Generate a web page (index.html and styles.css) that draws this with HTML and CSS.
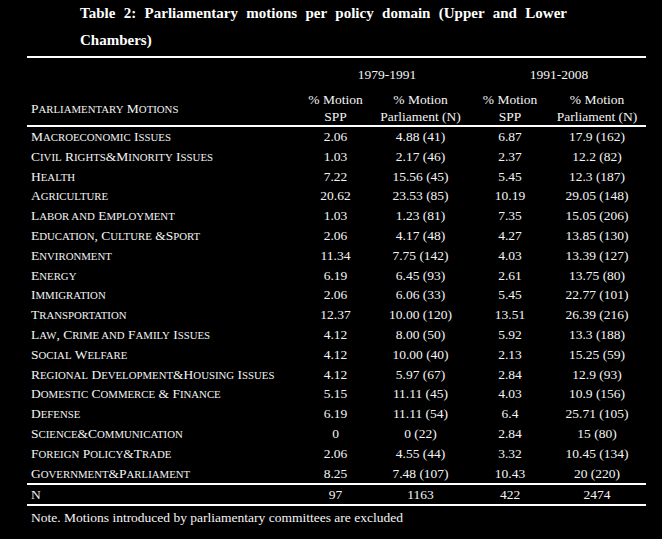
FILE: index.html
```html
<!DOCTYPE html>
<html lang="en">
<head>
<meta charset="utf-8">
<title>Table 2: Parliamentary motions per policy domain</title>
<link rel="stylesheet" href="styles.css">
</head>
<body>
<div class="page">
  <h1 class="title">Table 2: Parliamentary motions per policy domain (Upper and Lower Chambers)</h1>
  <table class="data">
    <colgroup>
      <col class="c-label">
      <col class="c-1">
      <col class="c-2">
      <col class="c-3">
      <col class="c-4">
    </colgroup>
    <thead>
      <tr class="period-row">
        <th class="label"></th>
        <th colspan="2">1979-1991</th>
        <th colspan="2">1991-2008</th>
      </tr>
      <tr class="sub-row">
        <th class="label">P<span class="sm">arliamentary</span> M<span class="sm">otions</span></th>
        <th>% Motion<br>SPP</th>
        <th>% Motion<br>Parliament (N)</th>
        <th>% Motion<br>SPP</th>
        <th>% Motion<br>Parliament (N)</th>
      </tr>
    </thead>
    <tbody class="body">
      <tr><td class="label">M<span class="sm">acroeconomic</span> I<span class="sm">ssues</span></td><td>2.06</td><td>4.88 (41)</td><td>6.87</td><td>17.9 (162)</td></tr>
      <tr><td class="label">C<span class="sm">ivil</span> R<span class="sm">ights</span>&amp;M<span class="sm">inority</span> I<span class="sm">ssues</span></td><td>1.03</td><td>2.17 (46)</td><td>2.37</td><td>12.2 (82)</td></tr>
      <tr><td class="label">H<span class="sm">ealth</span></td><td>7.22</td><td>15.56 (45)</td><td>5.45</td><td>12.3 (187)</td></tr>
      <tr><td class="label">A<span class="sm">griculture</span></td><td>20.62</td><td>23.53 (85)</td><td>10.19</td><td>29.05 (148)</td></tr>
      <tr><td class="label">L<span class="sm">abor and</span> E<span class="sm">mployment</span></td><td>1.03</td><td>1.23 (81)</td><td>7.35</td><td>15.05 (206)</td></tr>
      <tr><td class="label">E<span class="sm">ducation</span>, C<span class="sm">ulture</span> &amp;S<span class="sm">port</span></td><td>2.06</td><td>4.17 (48)</td><td>4.27</td><td>13.85 (130)</td></tr>
      <tr><td class="label">E<span class="sm">nvironment</span></td><td>11.34</td><td>7.75 (142)</td><td>4.03</td><td>13.39 (127)</td></tr>
      <tr><td class="label">E<span class="sm">nergy</span></td><td>6.19</td><td>6.45 (93)</td><td>2.61</td><td>13.75 (80)</td></tr>
      <tr><td class="label">I<span class="sm">mmigration</span></td><td>2.06</td><td>6.06 (33)</td><td>5.45</td><td>22.77 (101)</td></tr>
      <tr><td class="label">T<span class="sm">ransportation</span></td><td>12.37</td><td>10.00 (120)</td><td>13.51</td><td>26.39 (216)</td></tr>
      <tr><td class="label">L<span class="sm">aw</span>, C<span class="sm">rime and</span> F<span class="sm">amily</span> I<span class="sm">ssues</span></td><td>4.12</td><td>8.00 (50)</td><td>5.92</td><td>13.3 (188)</td></tr>
      <tr><td class="label">S<span class="sm">ocial</span> W<span class="sm">elfare</span></td><td>4.12</td><td>10.00 (40)</td><td>2.13</td><td>15.25 (59)</td></tr>
      <tr><td class="label">R<span class="sm">egional</span> D<span class="sm">evelopment</span>&amp;H<span class="sm">ousing</span> I<span class="sm">ssues</span></td><td>4.12</td><td>5.97 (67)</td><td>2.84</td><td>12.9 (93)</td></tr>
      <tr><td class="label">D<span class="sm">omestic</span> C<span class="sm">ommerce</span> &amp; F<span class="sm">inance</span></td><td>5.15</td><td>11.11 (45)</td><td>4.03</td><td>10.9 (156)</td></tr>
      <tr><td class="label">D<span class="sm">efense</span></td><td>6.19</td><td>11.11 (54)</td><td>6.4</td><td>25.71 (105)</td></tr>
      <tr><td class="label">S<span class="sm">cience</span>&amp;C<span class="sm">ommunication</span></td><td>0</td><td>0 (22)</td><td>2.84</td><td>15 (80)</td></tr>
      <tr><td class="label">F<span class="sm">oreign</span> P<span class="sm">olicy</span>&amp;T<span class="sm">rade</span></td><td>2.06</td><td>4.55 (44)</td><td>3.32</td><td>10.45 (134)</td></tr>
      <tr><td class="label">G<span class="sm">overnment</span>&amp;P<span class="sm">arliament</span></td><td>8.25</td><td>7.48 (107)</td><td>10.43</td><td>20 (220)</td></tr>
    </tbody>
    <tbody class="totals">
      <tr><td class="label">N</td><td>97</td><td>1163</td><td>422</td><td>2474</td></tr>
    </tbody>
  </table>
  <p class="note">Note. Motions introduced by parliamentary committees are excluded</p>
</div>
</body>
</html>
```

FILE: styles.css
```css
html, body {
  margin: 0;
  padding: 0;
  background: #000;
}

body {
  color: #f4f4f4;
  font-family: "Liberation Serif", "Times New Roman", serif;
  font-size: 13.5px;
}

.page {
  padding-left: 27px;
  width: 619px;
}

.title {
  margin: 0 0 2px 53px;
  width: 487px;
  font-size: 15px;
  font-weight: bold;
  line-height: 27px;
  text-align: justify;
  text-align-last: left;
  color: #fff;
}

.data {
  width: 619px;
  border-collapse: collapse;
  table-layout: fixed;
  border-top: 2px solid #fff;
  border-bottom: 2px solid #fff;
}

.c-label { width: 275px; }
.c-1 { width: 67px; }
.c-2 { width: 103px; }
.c-3 { width: 76px; }
.c-4 { width: 98px; }

.data th,
.data td {
  padding: 0;
  font-weight: normal;
  text-align: center;
  white-space: nowrap;
}

.data .label {
  text-align: left;
  padding-left: 4px;
}

.sm {
  font-size: 0.8em;
  line-height: 1;
  text-transform: uppercase;
}

.period-row th {
  height: 33px;
  vertical-align: middle;
  line-height: 17px;
}

.sub-row th {
  line-height: 17px;
  vertical-align: middle;
}

thead {
  border-bottom: 2px solid #fff;
}

.body td {
  height: 19.8px;
  line-height: 19.8px;
}

.totals {
  border-top: 2px solid #fff;
}

.totals td {
  height: 19px;
  line-height: 19px;
}

.note {
  margin: 2px 0 0 4px;
  line-height: 19px;
}
```
